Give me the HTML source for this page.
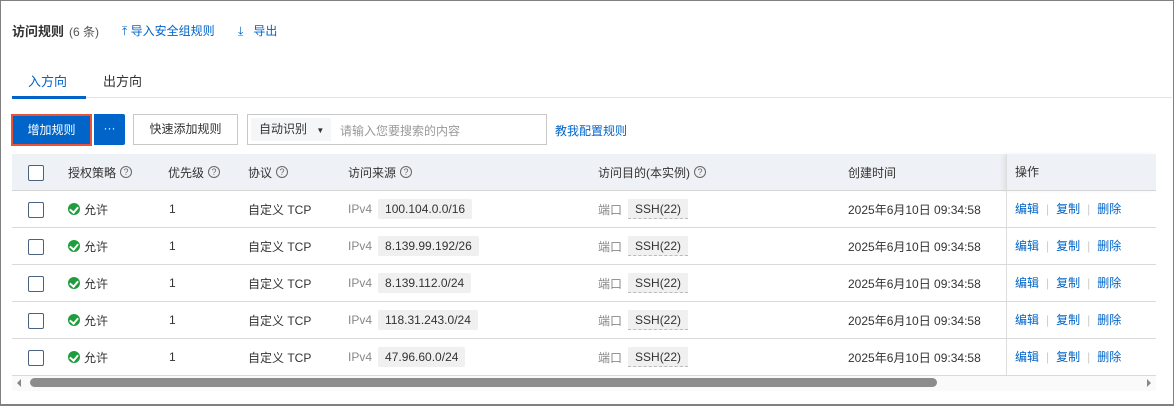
<!DOCTYPE html>
<html><head><meta charset="utf-8"><style>
*{margin:0;padding:0;box-sizing:border-box}
body{width:1174px;height:406px;overflow:hidden;background:#fff;font-family:"Liberation Sans","Noto Sans CJK SC",sans-serif;font-size:12px;color:#333;position:relative}
.frame{position:absolute;left:0;top:0;width:1174px;height:406px;border:1px solid #808080;border-bottom-width:2px}
.a{position:absolute;white-space:nowrap}
.blue{color:#0064c8}
.hdr{position:absolute;left:12px;top:154px;width:1144px;height:37px;background:#eef1f6;border-bottom:1px solid #d5d5d5}
.row{position:absolute;left:12px;width:1144px;height:37px;border-bottom:1px solid #d9d9d9}
.cb{position:absolute;left:16px;top:11px;width:16px;height:16px;border:1px solid #4a6180;border-radius:2px;background:#fff}
.c{position:absolute;top:8px;height:20px;display:flex;align-items:center;white-space:nowrap}
.q{display:inline-block;width:12px;height:12px;border:1px solid #666;border-radius:50%;font-size:9px;line-height:10px;text-align:center;color:#666;margin-left:4px}
.tag{display:inline-block;background:#f0f0f0;padding:0 7px;height:20px;line-height:20px;border-radius:2px;color:#333;margin-left:6px}
.tag2{background:#f0f0f0;padding:0 7px;height:20px;line-height:20px;display:inline-block;margin-left:6px;border-bottom:1px dashed #bbb}
.ok{display:inline-block;width:12px;height:12px;border-radius:50%;background:#1f9d3c;margin-right:4px;position:relative}
.ok:after{content:"";position:absolute;left:3px;top:2px;width:4px;height:6px;border:solid #fff;border-width:0 2px 2px 0;transform:rotate(40deg)}
.sep{color:#ccc;margin:0 7px}
.op{position:absolute;left:994px;top:0;height:37px;line-height:36px;padding-left:8px;border-left:1px solid #ddd;width:150px;white-space:nowrap}
</style></head><body>
<div class="frame"></div>
<div class="a" style="left:12px;top:21px;font-size:13px;font-weight:bold;color:#333">访问规则<span style="font-weight:normal;font-size:12px;color:#555;margin-left:5px">(6 条)</span></div>
<div class="a blue" style="left:122px;top:22px">⤒ 导入安全组规则</div>
<div class="a blue" style="left:238px;top:22px">⤓<span style="margin-left:10px">导出</span></div>
<div class="a" style="left:28px;top:71px;font-size:13px;color:#0064c8">入方向</div>
<div class="a" style="left:103px;top:71px;font-size:13px;color:#333">出方向</div>
<div class="a" style="left:12px;top:97px;width:1160px;height:1px;background:#e3e3e3"></div>
<div class="a" style="left:12px;top:96px;width:74px;height:3px;background:#0064c8"></div>
<div class="a" style="left:11px;top:114px;width:81px;height:32px;border:2px solid #e8533a;background:#0064c8;color:#fff;text-align:center;line-height:28px">增加规则</div>
<div class="a" style="left:94px;top:114px;width:31px;height:31px;background:#0064c8;color:#fff;text-align:center;line-height:28px;border-radius:0 2px 2px 0">···</div>
<div class="a" style="left:133px;top:114px;width:105px;height:31px;border:1px solid #c8c8c8;text-align:center;line-height:29px">快速添加规则</div>
<div class="a" style="left:247px;top:114px;width:300px;height:31px;border:1px solid #c8c8c8"></div>
<div class="a" style="left:251px;top:118px;width:80px;height:23px;background:#f5f6f8;line-height:23px;padding-left:8px">自动识别 <span style="font-size:8px;margin-left:6px">▼</span></div>
<div class="a" style="left:340px;top:122px;color:#999">请输入您要搜索的内容</div>
<div class="a blue" style="left:555px;top:122px">教我配置规则</div>

<div class="hdr">
<div class="cb"></div>
<div class="c" style="left:56px">授权策略<span class="q">?</span></div>
<div class="c" style="left:156px">优先级<span class="q">?</span></div>
<div class="c" style="left:236px">协议<span class="q">?</span></div>
<div class="c" style="left:336px">访问来源<span class="q">?</span></div>
<div class="c" style="left:586px">访问目的(本实例)<span class="q">?</span></div>
<div class="c" style="left:836px">创建时间</div>
<div class="op" style="box-shadow:-3px 0 4px rgba(0,0,0,.06)">操作</div>
</div>

<div class="row" style="top:191px"><div class="cb"></div><div class="c" style="left:56px"><span class="ok"></span>允许</div><div class="c" style="left:157px">1</div><div class="c" style="left:236px">自定义 TCP</div><div class="c" style="left:336px"><span style="color:#888">IPv4</span><span class="tag">100.104.0.0/16</span></div><div class="c" style="left:586px"><span style="color:#888">端口</span><span class="tag2">SSH(22)</span></div><div class="c" style="left:836px">2025年6月10日 09:34:58</div><div class="op blue">编辑<span class="sep">|</span>复制<span class="sep">|</span>删除</div></div>
<div class="row" style="top:228px"><div class="cb"></div><div class="c" style="left:56px"><span class="ok"></span>允许</div><div class="c" style="left:157px">1</div><div class="c" style="left:236px">自定义 TCP</div><div class="c" style="left:336px"><span style="color:#888">IPv4</span><span class="tag">8.139.99.192/26</span></div><div class="c" style="left:586px"><span style="color:#888">端口</span><span class="tag2">SSH(22)</span></div><div class="c" style="left:836px">2025年6月10日 09:34:58</div><div class="op blue">编辑<span class="sep">|</span>复制<span class="sep">|</span>删除</div></div>
<div class="row" style="top:265px"><div class="cb"></div><div class="c" style="left:56px"><span class="ok"></span>允许</div><div class="c" style="left:157px">1</div><div class="c" style="left:236px">自定义 TCP</div><div class="c" style="left:336px"><span style="color:#888">IPv4</span><span class="tag">8.139.112.0/24</span></div><div class="c" style="left:586px"><span style="color:#888">端口</span><span class="tag2">SSH(22)</span></div><div class="c" style="left:836px">2025年6月10日 09:34:58</div><div class="op blue">编辑<span class="sep">|</span>复制<span class="sep">|</span>删除</div></div>
<div class="row" style="top:302px"><div class="cb"></div><div class="c" style="left:56px"><span class="ok"></span>允许</div><div class="c" style="left:157px">1</div><div class="c" style="left:236px">自定义 TCP</div><div class="c" style="left:336px"><span style="color:#888">IPv4</span><span class="tag">118.31.243.0/24</span></div><div class="c" style="left:586px"><span style="color:#888">端口</span><span class="tag2">SSH(22)</span></div><div class="c" style="left:836px">2025年6月10日 09:34:58</div><div class="op blue">编辑<span class="sep">|</span>复制<span class="sep">|</span>删除</div></div>
<div class="row" style="top:339px"><div class="cb"></div><div class="c" style="left:56px"><span class="ok"></span>允许</div><div class="c" style="left:157px">1</div><div class="c" style="left:236px">自定义 TCP</div><div class="c" style="left:336px"><span style="color:#888">IPv4</span><span class="tag">47.96.60.0/24</span></div><div class="c" style="left:586px"><span style="color:#888">端口</span><span class="tag2">SSH(22)</span></div><div class="c" style="left:836px">2025年6月10日 09:34:58</div><div class="op blue">编辑<span class="sep">|</span>复制<span class="sep">|</span>删除</div></div>

<div class="a" style="left:12px;top:376px;width:1144px;height:15px;background:#fafafa"></div>
<div class="a" style="left:17px;top:379px;width:0;height:0;border-style:solid;border-width:4px 4px 4px 0;border-color:transparent #888 transparent transparent"></div>
<div class="a" style="left:30px;top:378px;width:907px;height:9px;background:#8c8c8c;border-radius:5px"></div>
<div class="a" style="left:1147px;top:379px;width:0;height:0;border-style:solid;border-width:4px 0 4px 4px;border-color:transparent transparent transparent #888"></div>
</body></html>
